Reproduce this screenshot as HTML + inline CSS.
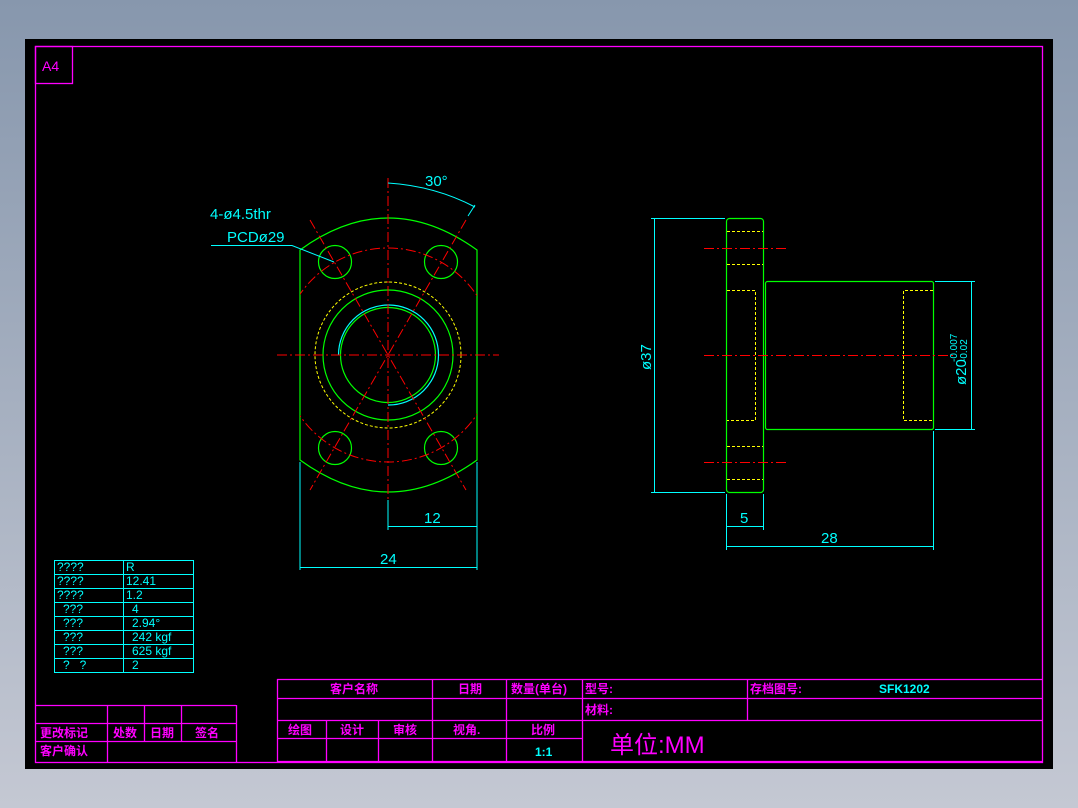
<!DOCTYPE html>
<html><head><meta charset="utf-8"><style>
html,body{margin:0;padding:0;width:1078px;height:808px;overflow:hidden;background:linear-gradient(#8797ad,#c4c8d3);}
svg{position:absolute;left:0;top:0}
text{font-family:"Liberation Sans","Noto Sans CJK SC",sans-serif}
</style></head><body>
<svg width="1078" height="808" viewBox="0 0 1078 808">
<rect x="25" y="39" width="1028" height="730" fill="#000"/>
<g fill="none" stroke="#ff00ff" stroke-width="1.3">
<rect x="35.5" y="46.5" width="1007" height="716"/>
<rect x="35.5" y="46.5" width="37" height="37"/>
<!-- title block -->
<path d="M277 679.5H1043M277 698.5H1043M277 720.5H1043M277 738.5H582M277 761.5H1043M277.5 679V762M432.5 679V762M506.5 679V762M582.5 679V762M747.5 679V720M326.5 720V762M378.5 720V762"/>
<path d="M35 705.5H236M35 723.5H236M35 741.5H236M236.5 705V762M107.5 705V762M144.5 705V741M181.5 705V741"/>
</g>
<g fill="#ff00ff" font-size="12" font-weight="bold">
<text x="42" y="71" font-size="14" font-weight="normal">A4</text>
<text x="330" y="693">客户名称</text>
<text x="458" y="693">日期</text>
<text x="511" y="693">数量(单台)</text>
<text x="585" y="693">型号:</text>
<text x="750" y="693">存档图号:</text>
<text x="585" y="714">材料:</text>
<text x="288" y="734">绘图</text>
<text x="340" y="734">设计</text>
<text x="393" y="734">审核</text>
<text x="453" y="734">视角.</text>
<text x="531" y="734">比例</text>
<text x="40" y="737">更改标记</text>
<text x="113" y="737">处数</text>
<text x="150" y="737">日期</text>
<text x="195" y="737">签名</text>
<text x="40" y="755">客户确认</text>
<text x="610" y="753" font-size="24" font-weight="normal">单位:MM</text>
</g>
<g fill="#00ffff" font-size="12">
<text x="879" y="693" font-weight="bold">SFK1202</text>
<text x="535" y="756" font-weight="bold">1:1</text>
</g>
<!-- cyan table -->
<g fill="none" stroke="#00ffff" stroke-width="1">
<rect x="54.5" y="560.5" width="139" height="112"/>
<path d="M123.5 560V673M54 574.5H194M54 588.5H194M54 602.5H194M54 616.5H194M54 630.5H194M54 644.5H194M54 658.5H194"/>
</g>
<g fill="#00ffff" font-size="12">
<text x="57" y="571">????</text><text x="126" y="571">R</text>
<text x="57" y="585">????</text><text x="126" y="585">12.41</text>
<text x="57" y="599">????</text><text x="126" y="599">1.2</text>
<text x="63" y="613">???</text><text x="132" y="613">4</text>
<text x="63" y="627">???</text><text x="132" y="627">2.94°</text>
<text x="63" y="641">???</text><text x="132" y="641">242 kgf</text>
<text x="63" y="655">???</text><text x="132" y="655">625 kgf</text>
<text x="63" y="669">?&#160;&#160;&#160;?</text><text x="132" y="669">2</text>
</g>
<!-- front view -->
<defs><clipPath id="fl"><path d="M300 250Q388 186 477 250V460Q388 524 300 460Z"/></clipPath></defs>
<g fill="none" stroke="#00ff00" stroke-width="1.2">
<path d="M300 250Q388 186 477 250V460Q388 524 300 460Z"/>
<circle cx="335" cy="262" r="16.5"/><circle cx="441" cy="262" r="16.5"/>
<circle cx="335" cy="448" r="16.5"/><circle cx="441" cy="448" r="16.5"/>
<circle cx="388" cy="355" r="65"/>
<circle cx="388" cy="355" r="47.5"/>
</g>
<path d="M338.5 355A50 50 0 1 1 388 405" fill="none" stroke="#00ffff" stroke-width="1.2"/>
<circle cx="388" cy="355" r="73" fill="none" stroke="#ffff00" stroke-width="1" stroke-dasharray="3,2"/>
<g fill="none" stroke="#ff0000" stroke-width="1" stroke-dasharray="10,3,2,3">
<circle cx="388" cy="355" r="107" clip-path="url(#fl)"/>
<path d="M277 355H499M388 178V528M310 220L466 490M466 220L310 490"/>
</g>
<g fill="none" stroke="#00ffff" stroke-width="1">
<path d="M388 183Q435 186 475 207"/>
<path d="M475 205L468 216"/>
<path d="M211 245.5H292L334 262"/>
<path d="M388 500V530M477 462V570M300 462V570M388 526.5H477M300 567.5H477"/>
</g>
<g fill="#00ffff" font-size="15">
<text x="425" y="186">30°</text>
<text x="210" y="219">4-ø4.5thr</text>
<text x="227" y="242">PCDø29</text>
<text x="424" y="523">12</text>
<text x="380" y="564">24</text>
</g>
<!-- side view -->
<g fill="none" stroke="#00ff00" stroke-width="1.2">
<rect x="726.5" y="218.5" width="37" height="274" rx="3"/>
<rect x="765.5" y="281.5" width="168" height="148" rx="2"/>
</g>
<g fill="none" stroke="#ffff00" stroke-width="1" stroke-dasharray="3,2">
<path d="M727 231.5H763M727 264.5H763M727 446.5H763M727 479.5H763"/>
<path d="M727 290.5H755.5V420.5H727M933 290.5H903.5V420.5H933"/>
</g>
<g fill="none" stroke="#ff0000" stroke-width="1" stroke-dasharray="10,3,2,3">
<path d="M704 248.5H786M704 462.5H786M704 355.5H955"/>
</g>
<g fill="none" stroke="#00ffff" stroke-width="1">
<path d="M651 218.5H725M651 492.5H725M654.5 218V492"/>
<path d="M935 281.5H975M935 429.5H975M971.5 281V429"/>
<path d="M726.5 494V550M763.5 494V530M933.5 431V550M726 526.5H763M726 546.5H933"/>
</g>
<g fill="#00ffff" font-size="15">
<text transform="translate(651,370) rotate(-90)">ø37</text>
<text transform="translate(966,385) rotate(-90)">ø20</text>
<text transform="translate(957,362) rotate(-90)" font-size="10">-0.007</text>
<text transform="translate(967,362) rotate(-90)" font-size="10">-0.02</text>
<text x="740" y="523">5</text>
<text x="821" y="543">28</text>
</g>
</svg>
</body></html>
